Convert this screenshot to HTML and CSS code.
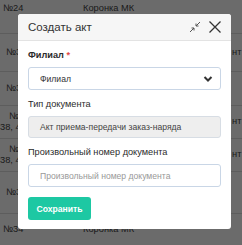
FILE: index.html
```html
<!DOCTYPE html>
<html lang="ru">
<head>
    <meta charset="UTF-8">
    <title>Создать акт</title>
    <link rel="stylesheet" href="styles.css">
</head>
<body>
    <table class="orders">
        <tr class="r1"><td class="num">№24</td><td class="name">Коронка МК</td><td class="tail"></td></tr>
        <tr class="r2"><td class="num short">№3</td><td class="name"></td><td class="tail">нт</td></tr>
        <tr class="r3"><td class="num short">№3</td><td class="name"></td><td class="tail"></td></tr>
        <tr class="r4"><td class="num two">№1<br>38, 4</td><td class="name"></td><td class="tail">нт</td></tr>
        <tr class="r5"><td class="num two">№1<br>38, 4</td><td class="name"></td><td class="tail">нт</td></tr>
        <tr class="r6"><td class="num short">№3</td><td class="name"></td><td class="tail"></td></tr>
        <tr class="r7"><td class="num">№34</td><td class="name">Коронка МК</td><td class="tail"></td></tr>
    </table>

    <div class="backdrop"></div>

    <div class="modal">
        <div class="modal-head">
            <span class="modal-title">Создать акт</span>
            <svg class="icon-shrink" width="12" height="12" viewBox="0 0 12 12">
                <path d="M1 11 L5 7 M5 7 L2.5 7 M5 7 L5 9.5 M11 1 L7 5 M7 5 L9.5 5 M7 5 L7 2.5" stroke="#555" stroke-width="1" fill="none"/>
            </svg>
            <svg class="icon-close" width="14" height="14" viewBox="0 0 14 14">
                <path d="M1.5 1.5 L12.5 12.5 M12.5 1.5 L1.5 12.5" stroke="#333" stroke-width="1.3" fill="none"/>
            </svg>
        </div>
        <div class="modal-body">
            <div class="field">
                <label class="label strong">Филиал <span class="req">*</span></label>
                <div class="control select">
                    <span>Филиал</span>
                    <svg width="10" height="8" viewBox="0 0 10 8">
                        <path d="M1.5 2 L5 5.5 L8.5 2" stroke="#333" stroke-width="2" fill="none"/>
                    </svg>
                </div>
            </div>
            <div class="field">
                <label class="label">Тип документа</label>
                <div class="control readonly">Акт приема-передачи заказ-наряда</div>
            </div>
            <div class="field">
                <label class="label">Произвольный номер документа</label>
                <div class="control placeholder">Произвольный номер документа</div>
            </div>
            <button class="save">Сохранить</button>
        </div>
    </div>
</body>
</html>
```

FILE: styles.css
```css
body {
    margin: 0;
    font-family: "Liberation Sans", Arial, sans-serif;
    background-color: #fff;
    width: 242px;
    height: 245px;
    overflow: hidden;
    position: relative;
}

.orders {
    border-collapse: collapse;
    table-layout: fixed;
    width: 100%;
    font-size: 9.3px;
    color: #444;
}

.orders td {
    border-bottom: 1px solid #ddd;
    padding: 0;
    vertical-align: middle;
    line-height: 11px;
    white-space: nowrap;
}

.orders .num {
    width: 40px;
    padding-left: 3px;
    box-sizing: border-box;
}

.orders .num.short {
    padding-left: 6px;
}

.orders .num.two {
    padding-left: 0;
    text-indent: 9px;
}

.orders .name {
    padding-left: 43px;
}

.orders .tail {
    width: 10px;
}

.r1 { height: 33px; }
.r1 td { vertical-align: top; padding-top: 3px; }
.r2 { height: 38px; }
.r3 { height: 34px; }
.r4 { height: 33px; }
.r5 { height: 33px; }
.r6 { height: 42px; }
.r7 { height: 32px; }

.backdrop {
    position: absolute;
    inset: 0;
    background-color: rgba(0, 0, 0, 0.58);
}

.modal {
    position: absolute;
    left: 18px;
    top: 14px;
    width: 213px;
    background-color: #fff;
    border-radius: 3px;
    overflow: hidden;
}

.modal-head {
    height: 26px;
    display: flex;
    align-items: center;
    padding: 0 9px 0 10px;
    background-color: #f6f6f6;
    border-bottom: 1px solid #e3e3e3;
}

.modal-title {
    flex: 1;
    font-size: 11.5px;
    color: #333;
}

.icon-shrink {
    margin-right: 7px;
}

.modal-body {
    padding: 7px 10px 9px 10px;
}

.field {
    margin-bottom: 7px;
}

.label {
    display: block;
    font-size: 9.2px;
    line-height: 14px;
    color: #2b2b2b;
    margin-bottom: 5px;
}

.label.strong {
    font-weight: bold;
}

.req {
    color: #e04848;
}

.control {
    box-sizing: border-box;
    height: 23px;
    border: 1px solid #c9d6e6;
    border-radius: 3px;
    padding: 0 11px;
    font-size: 8.6px;
    display: flex;
    align-items: center;
    color: #333;
}

.select {
    justify-content: space-between;
    padding-right: 7px;
}

.readonly {
    background-color: #eeeeee;
    border-color: #d7dde4;
    height: 22px;
    color: #444;
}

.placeholder {
    color: #999;
}

.save {
    margin-top: 3px;
    height: 23px;
    width: 63px;
    border: none;
    border-radius: 3px;
    background-color: #1dc8a3;
    color: #fff;
    font-family: "Liberation Sans", Arial, sans-serif;
    font-size: 8.6px;
    font-weight: bold;
    padding: 0;
}
```
